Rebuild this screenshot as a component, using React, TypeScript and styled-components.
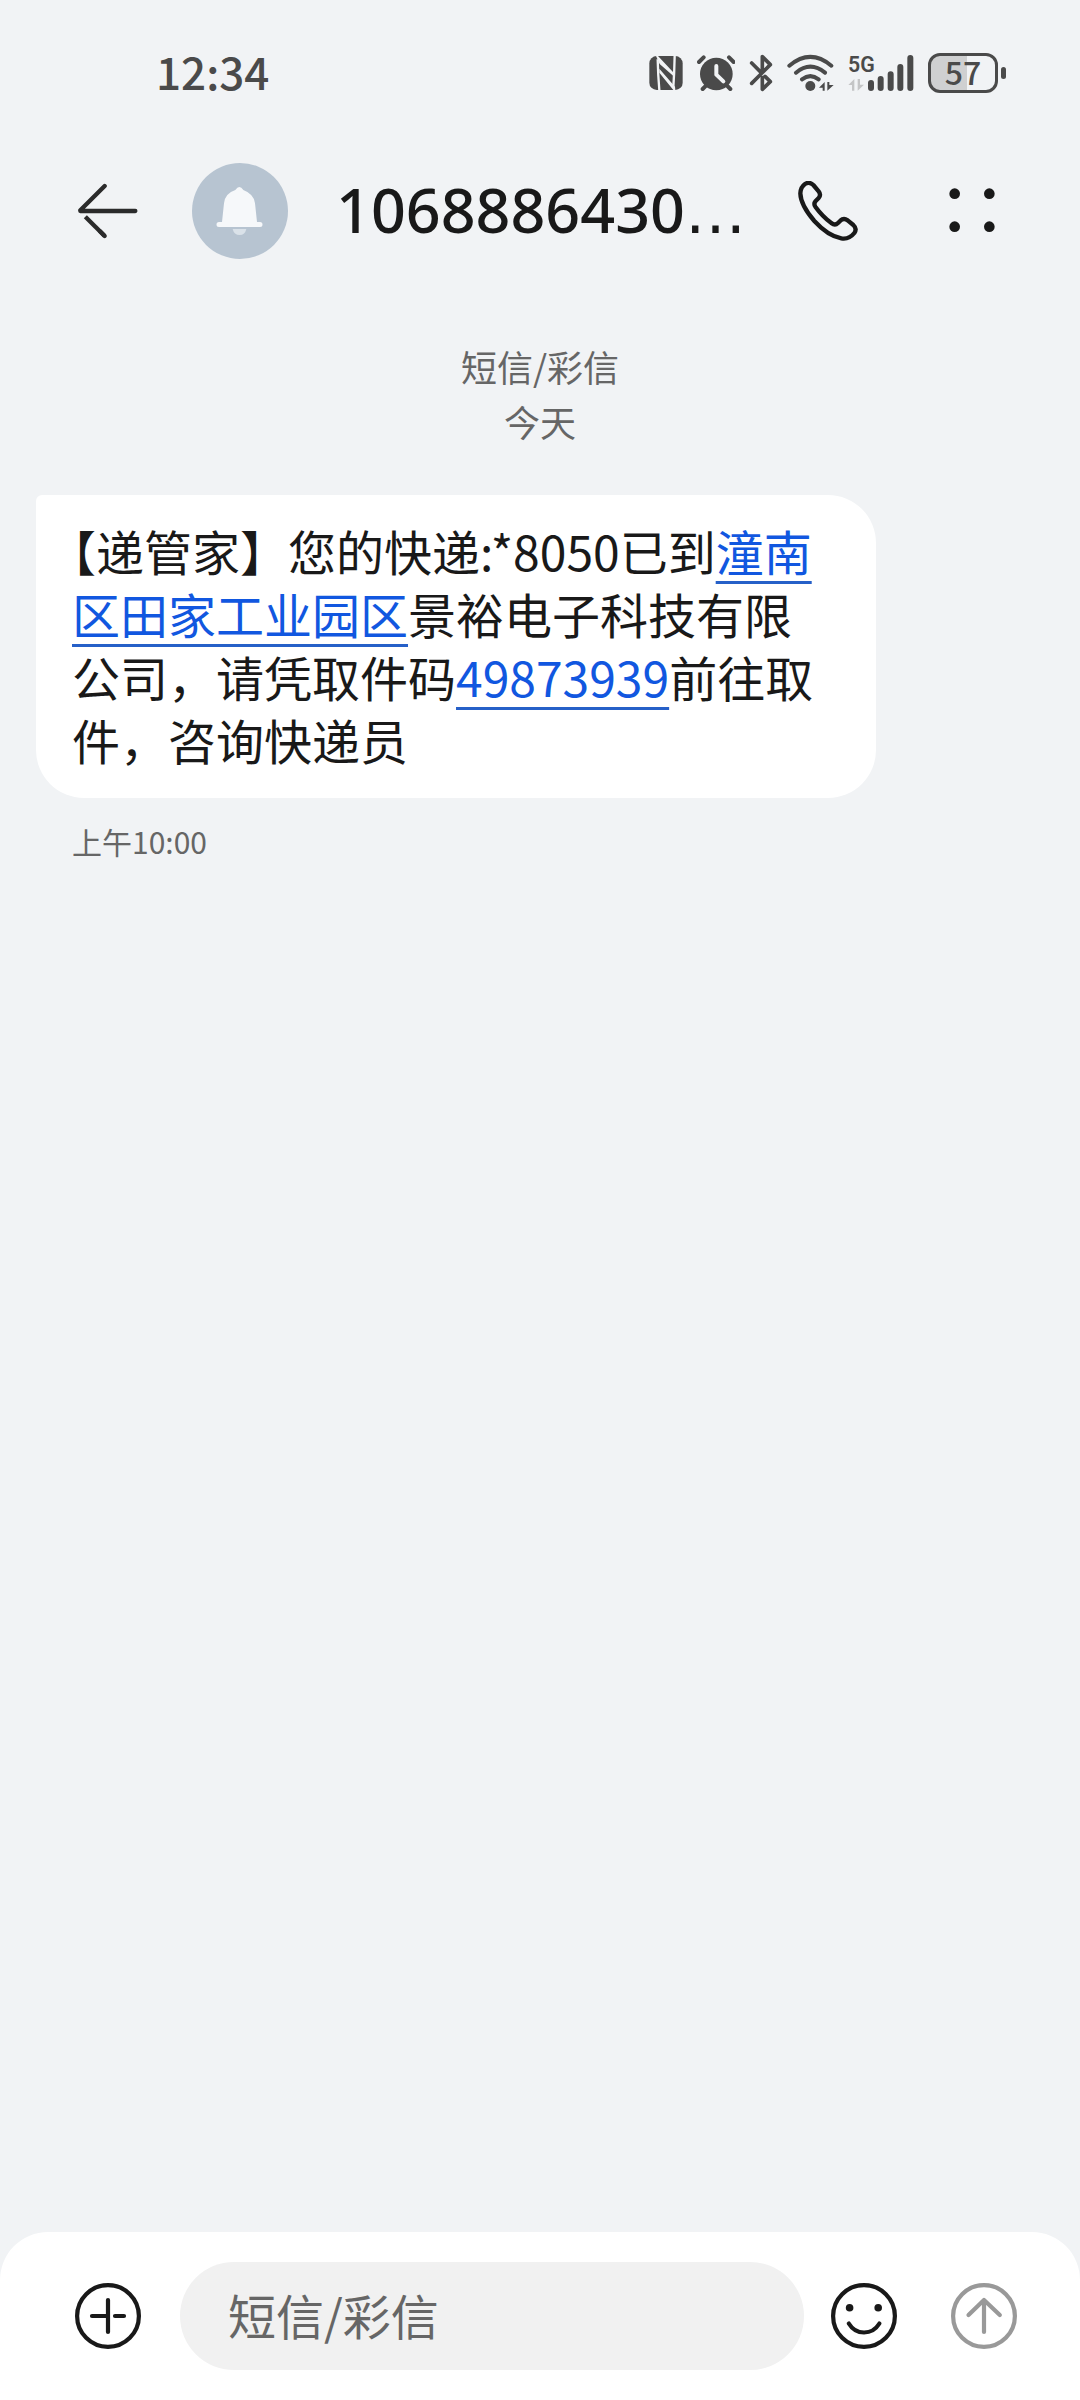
import React from "react";
import styled, { createGlobalStyle } from "styled-components";

const ink = "#191919";
const statusInk = "#4a4a4a";
const pageColor = "#f1f3f5";
const cjk = `"Noto Sans CJK SC", "Noto Sans", sans-serif`;

const GlobalStyle = createGlobalStyle`
  *, *::before, *::after { box-sizing: border-box; }
  body {
    margin: 0;
    background: ${pageColor};
    color: ${ink};
    font-family: ${cjk};
  }
  svg { display: block; flex: none; }
`;

const Screen = styled.div`
  display: flex;
  flex-direction: column;
  min-height: 100vh;
`;

const StatusBar = styled.div`
  display: flex;
  align-items: center;
  justify-content: space-between;
  height: 146px;
  padding: 0 74px 0 156px;
  color: ${statusInk};
`;

const Clock = styled.time`
  padding-bottom: 4px;
  font-size: 44px;
  line-height: 64px;
  font-weight: 500;
`;

const StatusIcons = styled.div`
  display: flex;
  align-items: center;
  gap: 14px;
`;

const Battery = styled.div`
  display: flex;
  align-items: center;
  gap: 3px;
`;

const BatteryCell = styled.div<{ $level: number }>`
  display: flex;
  align-items: center;
  justify-content: center;
  width: 70px;
  height: 40px;
  padding-bottom: 4px;
  border: 3px solid ${statusInk};
  border-radius: 12px;
  background: linear-gradient(to right, #cfd0d1 ${(p) => p.$level}%, transparent ${(p) => p.$level}%);
  font-size: 32px;
  line-height: 34px;
  font-weight: 500;
`;

const BatteryTip = styled.div`
  width: 5px;
  height: 12px;
  border-radius: 3px;
  background: ${statusInk};
`;

const Header = styled.header`
  display: flex;
  align-items: center;
  padding: 17px 78px 0;
`;

const IconButton = styled.button`
  display: flex;
  flex: none;
  padding: 0;
  border: 0;
  background: none;
  color: ${ink};
  cursor: pointer;

  &:disabled {
    color: #999;
    cursor: default;
  }
`;

const Avatar = styled.div`
  flex: none;
  margin-left: 54px;
  border-radius: 50%;
  background: #b7c4d1;
`;

const Title = styled.h1`
  flex: 1;
  min-width: 0;
  margin: 0 48px;
  white-space: nowrap;
  font-family: "Noto Sans", sans-serif;
  font-size: 61px;
  line-height: 84px;
  font-weight: 500;
`;

const Ellipsis = styled.span`
  font-family: "DejaVu Sans", sans-serif;
  font-weight: 400;
`;

const HeaderActions = styled.div`
  display: flex;
  gap: 84px;
`;

const Thread = styled.main`
  display: flex;
  flex: 1;
  flex-direction: column;
  padding: 80px 36px 36px;
`;

const DayLabel = styled.div`
  color: #666;
  font-size: 36px;
  line-height: 55px;
  text-align: center;
`;

const Message = styled.article`
  margin: 46px 168px 0 0;
`;

const Bubble = styled.p`
  margin: 0;
  padding: 24px 48px 27px 36px;
  border-radius: 6px 48px 48px 48px;
  background: #fff;
  font-size: 48px;
  line-height: 63px;
  text-spacing-trim: trim-start;
`;

const TextLink = styled.a`
  color: #1157e0;
  text-decoration: underline;
  text-decoration-color: #2660c8;
  text-decoration-thickness: 3px;
  text-underline-offset: 10px;
  text-decoration-skip-ink: none;
`;

const SentAt = styled.time`
  display: block;
  padding: 21px 36px 0;
  color: #666;
  font-size: 30px;
  line-height: 44px;
`;

const Composer = styled.form`
  display: flex;
  align-items: center;
  padding: 30px 63px 30px 75px;
  border-radius: 48px 48px 0 0;
  background: #fff;
`;

const MessageInput = styled.input`
  flex: 1;
  min-width: 0;
  height: 108px;
  margin: 0 27px 0 39px;
  padding: 0 48px 4px;
  border: 0;
  border-radius: 54px;
  outline: 0;
  background: #f1f1f1;
  color: ${ink};
  font-family: ${cjk};
  font-size: 48px;

  &::placeholder {
    color: #666;
    opacity: 1;
  }
`;

const ComposerActions = styled.div`
  display: flex;
  gap: 54px;
`;

const NfcIcon = () => (
  <svg width="34" height="38" viewBox="54 42 102 114" aria-hidden="true">
    <rect x="55" y="48" width="100" height="102" rx="22" fill={statusInk} />
    <path d="M80 58 Q81 105 85 150 M131 48 Q130 100 127 142" fill="none" stroke={pageColor} strokeWidth="7" />
    <path d="M75 48 L81 48 L128 98 V109 L86 72 Z M85 86 L132 140 L133 150 H127 L85 98 Z" fill={pageColor} />
  </svg>
);

const AlarmIcon = () => (
  <svg width="38" height="38" viewBox="198 42 114 114" fill="none" strokeLinecap="round" strokeLinejoin="round" strokeWidth="12" aria-hidden="true">
    <circle cx="256" cy="102" r="49" fill={statusInk} />
    <path d="M204 66 L218 52 M294 52 L308 66 M215 147 L228 134 M298 147 L285 134" stroke={statusInk} />
    <path d="M256 78 V104 L277 124" stroke={pageColor} />
  </svg>
);

const BluetoothIcon = () => (
  <svg width="24" height="38" viewBox="357 42 72 114" fill="none" stroke={statusInk} strokeLinecap="round" strokeLinejoin="round" strokeWidth="11" aria-hidden="true">
    <path d="M365 69 L393 97 M365 130 L421 74 L397 50 V88 M405 109 L421 125 L397 148 V113" />
  </svg>
);

const WifiIcon = () => (
  <svg width="47" height="38" viewBox="471 42 141 114" aria-hidden="true">
    <path d="M478 77 Q541 24 604 77 M498 98 Q541 62 585 98 M516 118 Q541 99 566 118" fill="none" stroke={statusInk} strokeWidth="12" strokeLinecap="round" />
    <circle cx="541" cy="138" r="15" fill={statusInk} />
    <path d="M567 143 L584 126 V152 H578 V143 Z M592 152 V126 H598 V135 H611 Z" fill={statusInk} />
  </svg>
);

const SignalIcon = () => (
  <svg width="66" height="48" viewBox="54 27 198 144" role="img" aria-label="5G">
    <text x="54" y="97" fill={statusInk} fontFamily="Roboto, sans-serif" fontWeight="600" fontSize="64">5G</text>
    <path d="M55 135 L73 117 V152 H66 V135 Z M83 152 V117 H90 V134 H102 Z" fill="#c4c5c6" />
    <path d="M123 129 V144 M152 117 V144 M182 103 V144 M211 81 V144 M241 54 V144" stroke={statusInk} strokeWidth="18" strokeLinecap="round" />
  </svg>
);

const BackIcon = () => (
  <svg width="60" height="60" viewBox="54 93 180 180" fill="none" stroke="#2b2b2b" strokeWidth="13" strokeLinecap="round" strokeLinejoin="round" aria-hidden="true">
    <path d="M134 108 L61 181 M61 183 H226" />
    <path d="M134 258 L76 200" strokeLinecap="butt" />
    <path d="M134 258 L120 244" />
  </svg>
);

const BellIcon = () => (
  <svg width="96" height="96" viewBox="396 39 288 288" aria-hidden="true">
    <path d="M477 216 H486 L492 160 Q495 130 526 120 Q538 102 550 120 Q582 132 585 160 L591 216 H600 A7 7 0 0 1 600 231 H477 A7 7 0 0 1 477 216 Z" fill="#f6f8fa" />
    <path d="M518 237 H559 Q555 255 539 255 Q522 255 518 237 Z" fill="#dae2e9" />
  </svg>
);

const PhoneIcon = () => (
  <svg width="60" height="60" viewBox="294 93 180 180" fill="none" stroke="currentColor" strokeWidth="13" strokeLinejoin="round" aria-hidden="true">
    <path d="M340 105 L356 124 Q364 134 356 144 L347 153 Q340 161 346 170 Q368 200 394 219 Q405 228 414 219 L421 212 Q431 203 443 211 L460 225 Q472 236 463 249 Q447 269 424 265 Q384 258 343 213 Q302 165 301 130 Q302 111 315 102 Q328 94 340 105 Z" />
  </svg>
);

const MoreIcon = () => (
  <svg width="60" height="60" viewBox="726 93 180 180" fill="currentColor" aria-hidden="true">
    <circle cx="764" cy="131" r="16" />
    <circle cx="868" cy="131" r="16" />
    <circle cx="764" cy="230" r="16" />
    <circle cx="868" cy="230" r="16" />
  </svg>
);

const RoundIcon = ({ children }: { children: React.ReactNode }) => (
  <svg width="66" height="66" viewBox="0 0 66 66" fill="none" stroke="currentColor" strokeWidth="4.2" strokeLinecap="round" strokeLinejoin="round" aria-hidden="true">
    <circle cx="33" cy="33" r="30.9" />
    {children}
  </svg>
);

export default function App() {
  return (
    <Screen>
      <GlobalStyle />
      <StatusBar>
        <Clock>12:34</Clock>
        <StatusIcons>
          <NfcIcon />
          <AlarmIcon />
          <BluetoothIcon />
          <WifiIcon />
          <SignalIcon />
          <Battery>
            <BatteryCell $level={57}>57</BatteryCell>
            <BatteryTip />
          </Battery>
        </StatusIcons>
      </StatusBar>

      <Header>
        <IconButton type="button" aria-label="返回">
          <BackIcon />
        </IconButton>
        <Avatar>
          <BellIcon />
        </Avatar>
        <Title>
          1068886430<Ellipsis>…</Ellipsis>
        </Title>
        <HeaderActions>
          <IconButton type="button" aria-label="呼叫">
            <PhoneIcon />
          </IconButton>
          <IconButton type="button" aria-label="更多">
            <MoreIcon />
          </IconButton>
        </HeaderActions>
      </Header>

      <Thread>
        <DayLabel>短信/彩信</DayLabel>
        <DayLabel>今天</DayLabel>
        <Message>
          <Bubble lang="zh-CN">
            【递管家】您的快递:*8050已到<TextLink href="#address">潼南区田家工业园区</TextLink>景裕电子科技有限公司，请凭取件码<TextLink href="#code">49873939</TextLink>前往取件，咨询快递员
          </Bubble>
          <SentAt>上午10:00</SentAt>
        </Message>
      </Thread>

      <Composer onSubmit={(e) => e.preventDefault()}>
        <IconButton type="button" aria-label="添加">
          <RoundIcon>
            <path d="M33 17 V49 M17 33 H33 M40 33 H49" />
          </RoundIcon>
        </IconButton>
        <MessageInput type="text" aria-label="短信/彩信" placeholder="短信/彩信" />
        <ComposerActions>
          <IconButton type="button" aria-label="表情">
            <RoundIcon>
              <path d="M17.8 40.5 C25 52.5 41 52.5 48.4 40.5" />
              <circle cx="18.6" cy="24.7" r="3.8" fill="currentColor" stroke="none" />
              <circle cx="47.2" cy="24.7" r="3.8" fill="currentColor" stroke="none" />
            </RoundIcon>
          </IconButton>
          <IconButton type="submit" aria-label="发送" disabled>
            <RoundIcon>
              <path d="M17.5 32 L33 17 L48.8 32 M33 17 V49" />
            </RoundIcon>
          </IconButton>
        </ComposerActions>
      </Composer>
    </Screen>
  );
}
